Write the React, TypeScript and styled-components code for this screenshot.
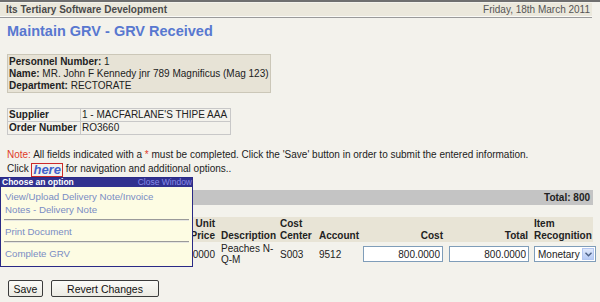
import React from 'react';
import styled, { createGlobalStyle } from 'styled-components';

const GlobalStyle = createGlobalStyle`
  html, body {
    margin: 0;
    padding: 0;
    background: #f3f2ec;
    font-family: "Liberation Sans", Arial, sans-serif;
    font-size: 10px;
    color: #222;
  }
`;

const Page = styled.div`
  position: relative;
  width: 600px;
  height: 302px;
  overflow: hidden;
  border-top: 2px solid #6f6f6f;
  box-sizing: border-box;
`;

const TopBar = styled.div`
  width: 592px;
  margin-top: 1px;
  height: 14px;
  background: #ebe8dc;
  display: flex;
  justify-content: space-between;
  align-items: center;
  padding: 0 2px 0 6px;
  box-sizing: border-box;
  border-bottom: 1px solid #fafaf6;
`;

const Brand = styled.span`
  font-weight: bold;
  font-size: 10px;
  color: #4a4a4a;
`;

const DateText = styled.span`
  font-size: 10px;
  color: #555;
`;

const Rule = styled.div`
  width: 592px;
  height: 1px;
  background: #9a9a9a;
`;

const Content = styled.div`
  padding: 0 7px;
  width: 586px;
`;

const Title = styled.h1`
  margin: 5px 0 0;
  font-size: 14.5px;
  line-height: 17px;
  font-weight: bold;
  color: #5878d0;
`;

const InfoBox = styled.div`
  display: inline-block;
  margin-top: 14px;
  background: #e7e3d6;
  border: 1px solid #cbc7b8;
  padding: 1px 1px 0 1px;
  line-height: 12px;
  white-space: nowrap;
`;

const Label = styled.b`
  font-weight: bold;
`;

const SupplierTable = styled.table`
  margin-top: 15px;
  border-collapse: collapse;
  border: 1px solid #c8c8c8;
  td {
    border: 1px solid #c8c8c8;
    padding: 0 2px 0 1px;
    height: 12px;
    line-height: 12px;
    font-size: 10px;
    white-space: nowrap;
  }
  td:first-child {
    font-weight: bold;
    width: 69px;
  }
  td:last-child {
    width: 146px;
  }
`;

const Note = styled.div`
  margin-top: 13px;
  line-height: 14px;
`;

const Red = styled.span`
  color: #e03a2a;
`;

const HereBox = styled.span`
  display: inline-block;
  border: 1px solid #cc2a2a;
  padding: 0 1px;
  line-height: 12px;
  font-size: 13px;
  font-weight: bold;
  font-style: italic;
  color: #3f62cc;
  vertical-align: -2px;
`;

const TotalBar = styled.div`
  margin-top: 13px;
  height: 15px;
  background: #c4c4c4;
  text-align: right;
  font-weight: bold;
  line-height: 15px;
  padding-right: 3px;
`;

const GridTable = styled.table`
  margin-top: 12px;
  width: 586px;
  table-layout: fixed;
  border-collapse: collapse;
  th, td {
    padding: 1px 3px 0;
    font-size: 10px;
    line-height: 12px;
  }
  th {
    background: #e8e4d6;
    font-weight: bold;
    text-align: left;
    vertical-align: bottom;
  }
  td {
    vertical-align: middle;
    line-height: 11px;
    padding: 1px 3px;
  }
`;

const HeadCell = styled.th<{ $align?: 'left' | 'right'; $nowrap?: boolean }>`
  && {
    text-align: ${p => p.$align || 'left'};
    white-space: ${p => (p.$nowrap ? 'nowrap' : 'normal')};
  }
`;

const Cell = styled.td<{ $align?: 'left' | 'right' }>`
  && {
    text-align: ${p => p.$align || 'left'};
  }
`;

const NumInput = styled.input`
  width: 80px;
  height: 16px;
  box-sizing: border-box;
  border: 1px solid #7f9db9;
  background: #fff;
  text-align: right;
  font-family: "Liberation Sans", Arial, sans-serif;
  font-size: 10px;
  color: #222;
  padding: 0 2px;
  display: block;
  margin-left: auto;
`;

const Select = styled.div`
  width: 62px;
  height: 16px;
  box-sizing: border-box;
  border: 1px solid #7f9db9;
  background: #fff;
  display: flex;
  align-items: center;
  justify-content: space-between;
  padding: 0 1px 0 3px;
  font-size: 10px;
`;

const ArrowBtn = styled.span`
  width: 12px;
  height: 12px;
  background: linear-gradient(#dfe8fb, #b6caf4);
  border: 1px solid #b3c6f0;
  box-sizing: border-box;
  display: flex;
  align-items: center;
  justify-content: center;
`;

const Buttons = styled.div`
  margin-top: 14px;
  display: flex;
  gap: 8px;
  padding-left: 1px;
`;

const Button = styled.button<{ w: number }>`
  width: ${p => p.w}px;
  height: 17px;
  border: 1px solid #3b3b3b;
  border-radius: 2px;
  background: linear-gradient(#fbfbf8, #ebeae2);
  font-family: "Liberation Sans", Arial, sans-serif;
  font-size: 10.5px;
  padding: 0;
  color: #111;
`;

const Popup = styled.div`
  position: absolute;
  left: 0;
  top: 175px;
  width: 193px;
  height: 90px;
  box-sizing: border-box;
  background: #fdfce3;
  border: 1px solid #2a2a86;
`;

const PopupHead = styled.div`
  height: 9px;
  background: #31318f;
  display: flex;
  justify-content: space-between;
  align-items: center;
  padding: 0 0 0 1px;
  font-size: 8.5px;
  line-height: 9px;
`;

const PopupTitle = styled.span`
  color: #fff;
  font-weight: bold;
`;

const PopupClose = styled.span`
  color: #8a8ae8;
`;

const PopupBody = styled.div`
  padding: 3px 3px 0;
`;

const MenuItem = styled.div`
  color: #7a8cc4;
  font-size: 9.7px;
  line-height: 13px;
  padding: 0 1px;
`;

const MenuRule = styled.div`
  height: 0;
  border-top: 1px solid #9a9a9a;
  border-bottom: 1px solid #e6e6e0;
  margin: 3px 0 4px;
`;

export default function App() {
  return (
    <Page>
      <GlobalStyle />
      <TopBar>
        <Brand>Its Tertiary Software Development</Brand>
        <DateText>Friday, 18th March 2011</DateText>
      </TopBar>
      <Rule />
      <Content>
        <Title>Maintain GRV - GRV Received</Title>
        <div>
          <InfoBox>
            <div><Label>Personnel Number:</Label> 1</div>
            <div><Label>Name:</Label> MR. John F Kennedy jnr 789 Magnificus (Mag 123)</div>
            <div><Label>Department:</Label> RECTORATE</div>
          </InfoBox>
        </div>
        <SupplierTable>
          <tbody>
            <tr><td>Supplier</td><td>1 - MACFARLANE'S THIPE AAA</td></tr>
            <tr><td>Order Number</td><td>RO3660</td></tr>
          </tbody>
        </SupplierTable>
        <Note>
          <Red>Note:</Red> All fields indicated with a <Red>*</Red> must be completed. Click the 'Save' button in order to submit the entered information.
          <br />
          Click <HereBox>here</HereBox> for navigation and additional options..
        </Note>
        <TotalBar>Total: 800</TotalBar>
        <GridTable>
          <colgroup>
            <col style={{ width: 93 }} />
            <col style={{ width: 70 }} />
            <col style={{ width: 48 }} />
            <col style={{ width: 59 }} />
            <col style={{ width: 39 }} />
            <col style={{ width: 44 }} />
            <col style={{ width: 86 }} />
            <col style={{ width: 85 }} />
            <col style={{ width: 62 }} />
          </colgroup>
          <thead>
            <tr>
              <HeadCell>Item</HeadCell>
              <HeadCell $align="right">Qty</HeadCell>
              <HeadCell $align="right">Unit Price</HeadCell>
              <HeadCell $nowrap>Description</HeadCell>
              <HeadCell>Cost Center</HeadCell>
              <HeadCell>Account</HeadCell>
              <HeadCell $align="right">Cost</HeadCell>
              <HeadCell $align="right">Total</HeadCell>
              <HeadCell>Item Recognition</HeadCell>
            </tr>
          </thead>
          <tbody>
            <tr>
              <Cell>PEACH01</Cell>
              <Cell $align="right">1</Cell>
              <Cell $align="right">800.0000</Cell>
              <Cell>Peaches N-Q-M</Cell>
              <Cell>S003</Cell>
              <Cell>9512</Cell>
              <Cell><NumInput defaultValue="800.0000" /></Cell>
              <Cell><NumInput defaultValue="800.0000" /></Cell>
              <Cell>
                <Select>
                  Monetary
                  <ArrowBtn>
                    <svg width="7" height="5" viewBox="0 0 7 5">
                      <path d="M0.5 0.8 L3.5 3.8 L6.5 0.8" fill="none" stroke="#4d6185" strokeWidth="1.4" />
                    </svg>
                  </ArrowBtn>
                </Select>
              </Cell>
            </tr>
          </tbody>
        </GridTable>
        <Buttons>
          <Button w={35}>Save</Button>
          <Button w={108}>Revert Changes</Button>
        </Buttons>
      </Content>
      <Popup>
        <PopupHead>
          <PopupTitle>Choose an option</PopupTitle>
          <PopupClose>Close Window</PopupClose>
        </PopupHead>
        <PopupBody>
          <MenuItem>View/Upload Delivery Note/Invoice</MenuItem>
          <MenuItem>Notes - Delivery Note</MenuItem>
          <MenuRule />
          <MenuItem>Print Document</MenuItem>
          <MenuRule />
          <MenuItem>Complete GRV</MenuItem>
        </PopupBody>
      </Popup>
    </Page>
  );
}
